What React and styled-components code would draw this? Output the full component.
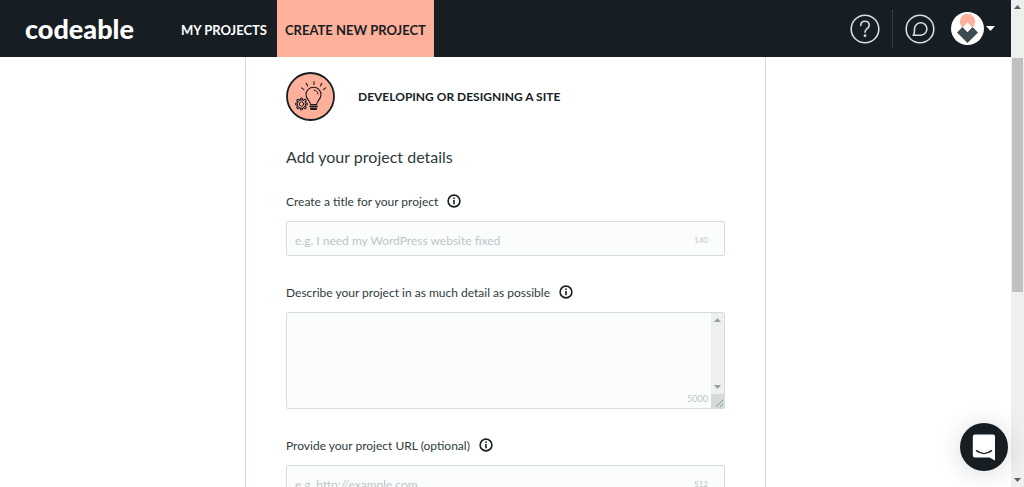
import React from 'react'
import styled, { createGlobalStyle, ThemeProvider } from 'styled-components'

const theme = {
  ink: '#161d23',
  peach: '#ffb09a',
  text: '#2f3a40',
  line: '#d3dcdb',
  field: '#fbfdfc',
  muted: '#bcc6ca',
  track: '#eef0ef',
  sans: 'Lato, "Open Sans", sans-serif',
}

const GlobalStyle = createGlobalStyle`
  * {
    box-sizing: border-box;
  }
  body {
    margin: 0;
    background: white;
    color: ${theme.text};
    font-family: ${theme.sans};
    font-size: 12px;
  }
  button, input, textarea {
    font-family: inherit;
    margin: 0;
  }
  svg {
    display: block;
  }
`

const Screen = styled.div`
  display: flex;
  height: 100vh;
  overflow: hidden;
`

const Page = styled.div`
  flex: 1;
  min-width: 0;
  display: flex;
  flex-direction: column;
`

const TopBar = styled.header`
  display: flex;
  align-items: stretch;
  flex: none;
  height: 57px;
  padding: 0 16px 0 25px;
  background: ${props => props.theme.ink};
`

const Logo = styled.a`
  display: flex;
  align-items: center;
  margin-right: 35px;
  color: white;
  font-size: 27px;
  font-weight: 900;
  text-decoration: none;
`

const Nav = styled.nav`
  display: flex;
`

const NavLink = styled.a`
  display: flex;
  align-items: center;
  padding: ${props => (props.$active ? '2px 8px 0' : '2px 10px 0 12px')};
  color: ${props => (props.$active ? props.theme.ink : 'white')};
  background: ${props => (props.$active ? props.theme.peach : 'transparent')};
  font-size: 13px;
  font-weight: 700;
  text-decoration: none;
  white-space: nowrap;
`

const Actions = styled.div`
  display: flex;
  align-items: center;
  margin-left: auto;
`

const IconButton = styled.button`
  display: flex;
  align-items: center;
  gap: 2px;
  padding: 0;
  border: 0;
  background: none;
  color: #d9dddf;
`

const Divider = styled.span`
  height: 38px;
  margin: 0 12px;
  border-left: 1px dotted #4a5359;
`

const Account = styled(IconButton)`
  margin-left: 16px;
  color: white;
`

const Content = styled.main`
  flex: 1;
  min-height: 0;
  overflow: hidden;
`

const Card = styled.form`
  max-width: 521px;
  min-height: 100%;
  margin: 0 auto;
  padding: 15px 40px 40px;
  border: solid ${props => props.theme.line};
  border-width: 0 1px;
`

const Category = styled.div`
  display: flex;
  align-items: center;
  gap: 23px;
  h1 {
    margin: 0;
    color: ${props => props.theme.ink};
    font-size: 12px;
    font-weight: 700;
  }
`

const Subtitle = styled.h2`
  margin: 26px 0 0;
  color: ${props => props.theme.text};
  font-size: 16px;
  line-height: 20px;
  font-weight: 400;
`

const Field = styled.div`
  margin-top: ${props => (props.$first ? '25px' : '27px')};
`

const LabelRow = styled.div`
  display: flex;
  align-items: center;
  gap: 9px;
  margin-bottom: 11px;
  line-height: 16px;
  label {
    padding-top: 2px;
  }
`

const HelpButton = styled.button`
  padding: 0;
  border: 0;
  background: none;
  color: ${props => props.theme.ink};
`

const Box = styled.div`
  display: flex;
  align-items: ${props => (props.$tall ? 'stretch' : 'center')};
  height: ${props => (props.$tall ? '97px' : '35px')};
  border: 1px solid ${props => props.theme.line};
  border-radius: 2px;
  background: ${props => props.theme.field};
  overflow: hidden;
`

const Input = styled.input`
  flex: 1;
  min-width: 0;
  padding: 3px 8px 0;
  border: 0;
  outline: 0;
  background: transparent;
  font-size: 12px;
  &::placeholder {
    color: ${props => props.theme.muted};
    opacity: 1;
  }
`

const TextArea = styled.textarea`
  flex: 1;
  min-width: 0;
  padding: 8px;
  border: 0;
  outline: 0;
  background: transparent;
  font-size: 12px;
  resize: none;
  overflow: hidden;
`

const Counter = styled.span`
  align-self: ${props => (props.$bottom ? 'flex-end' : 'center')};
  padding: ${props => (props.$bottom ? '0 3px 3px 0' : '3px 16px 0 0')};
  color: ${props => props.theme.muted};
  font-size: ${props => (props.$bottom ? '9px' : '8px')};
  line-height: 12px;
`

const InnerTrack = styled.div`
  display: flex;
  flex-direction: column;
  justify-content: space-between;
  align-items: center;
  width: 13px;
  padding-top: 5px;
  background: ${props => props.theme.track};
`

const TrackEnd = styled.div`
  display: flex;
  flex-direction: column;
  align-items: center;
  gap: 5px;
`

const Grip = styled.div`
  display: flex;
  justify-content: flex-end;
  align-items: flex-end;
  width: 13px;
  height: 14px;
  background: #d5dadb;
`

const ScrollTrack = styled.div`
  display: flex;
  flex-direction: column;
  align-items: center;
  width: 13px;
  padding: 5px 0;
  background: ${props => props.theme.track};
`

const ScrollThumb = styled.div`
  flex: 0 0 49%;
  width: 11px;
  margin-top: 49px;
  background: #bec1c0;
`

const ScrollEnd = styled.div`
  margin-top: auto;
`

const ChatButton = styled.button`
  position: fixed;
  right: 16px;
  bottom: 16px;
  display: flex;
  align-items: center;
  justify-content: center;
  width: 48px;
  height: 48px;
  padding: 0;
  border: 0;
  border-radius: 50%;
  background: ${props => props.theme.ink};
  box-shadow: 0 2px 24px rgba(22, 29, 35, 0.16);
`

const Arrow = ({ down, color = '#5b6063' }) => (
  <svg width="7" height="4" viewBox="0 0 7 4">
    <path d={down ? 'M0 0h7L3.500 4z' : 'M0 4h7L3.500 0z'} fill={color} />
  </svg>
)

const Caret = () => (
  <svg width="9" height="5" viewBox="0 0 9 5">
    <path d="M0 0h9L4.500 5z" fill="white" />
  </svg>
)

const QuestionIcon = () => (
  <svg width="30" height="30" viewBox="0 0 30 30" fill="none" stroke="currentColor" strokeWidth="1.600" strokeLinecap="round">
    <circle cx="15" cy="15" r="13.800" />
    <path d="M10.800 11.500c0-2.600 1.800-4.200 4.200-4.200s4.200 1.600 4.200 3.900c0 2-1.300 2.900-2.600 3.900-1 .8-1.600 1.500-1.600 3.200" />
    <circle cx="15" cy="21.700" r="0.600" fill="currentColor" />
  </svg>
)

const BubbleIcon = () => (
  <svg width="30" height="30" viewBox="0 0 30 30" fill="none" stroke="currentColor" strokeWidth="1.600">
    <circle cx="15" cy="15" r="13.800" />
    <path d="M8.200 21.200c1.200-.9 1.300-2.300 1.300-5.700a6.200 6.200 0 1 1 6.200 5.700z" strokeLinejoin="round" />
  </svg>
)

const Avatar = () => (
  <svg width="33" height="33" viewBox="0 0 33 33">
    <circle cx="16.500" cy="16.500" r="16.500" fill="white" />
    <circle cx="16.500" cy="9.500" r="7.700" fill={theme.peach} />
    <path d="M6 20.500l5.500-5.500 5 5 5-5 5.500 5.500L16.500 31z" fill="#3d4a51" />
    <path d="M16.500 10.500l4.700 4.700-4.700 4.800-4.700-4.800z" fill="white" />
  </svg>
)

const InfoIcon = () => (
  <svg width="14" height="14" viewBox="0 0 14 14" fill="none" stroke="currentColor" strokeWidth="1.600">
    <circle cx="7" cy="7" r="5.900" />
    <path d="M7 6v4.200M7 3.600v1.500" />
  </svg>
)

const GripIcon = () => (
  <svg width="9" height="9" viewBox="0 0 9 9">
    <path d="M1 8l7-7M5 8l3-3" stroke="#8f9699" />
  </svg>
)

const teeth = [0, 45, 90, 135, 180, 225, 270, 315]

const IdeaIcon = () => (
  <svg width="49" height="49" viewBox="0 0 49 49" fill="none" stroke={theme.ink} strokeLinecap="round" strokeLinejoin="round">
    <circle cx="24.500" cy="24.500" r="23.500" fill={theme.peach} strokeWidth="1.800" />
    <g strokeWidth="1.100">
      <path d="M24.500 32.500c0-3.500-4.500-5-4.500-9.800a7.500 7.500 0 0 1 15 0c0 4.800-4.300 6.300-4.300 9.800z" />
      <path d="M28 18.200c2.300.1 3.700 1.500 3.900 3.800" strokeWidth="1" />
      <path d="M24.300 34.500h6.600M25 37h5.200" strokeWidth="1.900" />
      <path d="M28 9.500v3M20.200 11.200l1.400 2.700M35.800 11.200l-1.400 2.700M15.500 15.900l2.400 1.700M39.800 15.900l-2.400 1.700" />
    </g>
    <g transform="translate(15.500 32)" strokeWidth="1">
      <path d="M3.700-2.200A4.300 4.300 0 1 1 2.200-3.700" />
      <circle r="2.200" />
      {teeth.map(angle => (
        <path key={angle} d="M-1.200-4.200l.3-1.700h1.800l.3 1.700" transform={`rotate(${angle})`} />
      ))}
    </g>
  </svg>
)

const ChatIcon = () => (
  <svg width="24" height="27" viewBox="0 0 24 27">
    <path d="M3 .5h18a2 2 0 0 1 2 2V26.500l-5.500-3H3a2.200 2.200 0 0 1-2.200-2.200V2.700A2.200 2.200 0 0 1 3 .5z" fill="white" />
    <path d="M4.500 16.700c4.600 3.700 10.400 3.700 15 0" fill="none" stroke={theme.ink} strokeWidth="1.500" strokeLinecap="round" />
  </svg>
)

const Label = ({ id, children }) => (
  <LabelRow>
    <label htmlFor={id}>{children}</label>
    <HelpButton type="button" aria-label="More information">
      <InfoIcon />
    </HelpButton>
  </LabelRow>
)

const TextField = ({ id, label, placeholder, limit, first }) => (
  <Field $first={first}>
    <Label id={id}>{label}</Label>
    <Box>
      <Input id={id} type="text" placeholder={placeholder} maxLength={limit} />
      <Counter>{limit}</Counter>
    </Box>
  </Field>
)

const DescriptionField = () => (
  <Field>
    <Label id="description">Describe your project in as much detail as possible</Label>
    <Box $tall>
      <TextArea id="description" maxLength={5000} />
      <Counter $bottom>5000</Counter>
      <InnerTrack>
        <Arrow color="#9a9fa1" />
        <TrackEnd>
          <Arrow down color="#9a9fa1" />
          <Grip>
            <GripIcon />
          </Grip>
        </TrackEnd>
      </InnerTrack>
    </Box>
  </Field>
)

export default function App() {
  return (
    <ThemeProvider theme={theme}>
      <GlobalStyle />
      <Screen>
        <Page>
          <TopBar>
            <Logo href="#home">codeable</Logo>
            <Nav>
              <NavLink href="#projects">MY PROJECTS</NavLink>
              <NavLink href="#new" $active>CREATE NEW PROJECT</NavLink>
            </Nav>
            <Actions>
              <IconButton type="button" aria-label="Help">
                <QuestionIcon />
              </IconButton>
              <Divider />
              <IconButton type="button" aria-label="Messages">
                <BubbleIcon />
              </IconButton>
              <Account type="button" aria-label="Account">
                <Avatar />
                <Caret />
              </Account>
            </Actions>
          </TopBar>
          <Content>
            <Card>
              <Category>
                <IdeaIcon />
                <h1>DEVELOPING OR DESIGNING A SITE</h1>
              </Category>
              <Subtitle>Add your project details</Subtitle>
              <TextField
                id="title"
                label="Create a title for your project"
                placeholder="e.g. I need my WordPress website fixed"
                limit={140}
                first
              />
              <DescriptionField />
              <TextField
                id="url"
                label="Provide your project URL (optional)"
                placeholder="e.g. http://example.com"
                limit={512}
              />
            </Card>
          </Content>
        </Page>
        <ScrollTrack>
          <Arrow />
          <ScrollThumb />
          <ScrollEnd>
            <Arrow down />
          </ScrollEnd>
        </ScrollTrack>
      </Screen>
      <ChatButton type="button" aria-label="Open chat">
        <ChatIcon />
      </ChatButton>
    </ThemeProvider>
  )
}
